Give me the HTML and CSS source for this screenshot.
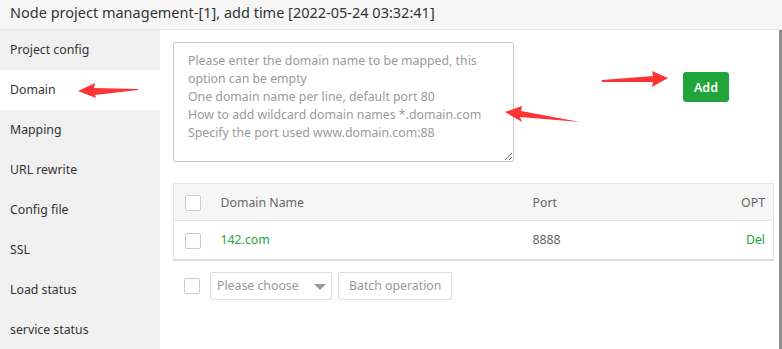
FILE: index.html
```html
<!DOCTYPE html>
<html lang="en">
<head>
  <meta charset="UTF-8" />
  <title>Node project management</title>
  <link rel="stylesheet" href="styles.css">
</head>
<body>
  <div class="title">Node project management-[1], add time [2022-05-24 03:32:41]</div>

  <div class="main">
    <!-- Side menu -->
    <ul class="menu">
      <li>Project config</li>
      <li class="active">Domain</li>
      <li>Mapping</li>
      <li>URL rewrite</li>
      <li>Config file</li>
      <li>SSL</li>
      <li>Load status</li>
      <li>service status</li>
    </ul>

    <div class="content">
      <div class="add-row">
        <textarea class="domain-input" placeholder="Please enter the domain name to be mapped, this option can be empty&#10;One domain name per line, default port 80&#10;How to add wildcard domain names *.domain.com&#10;Specify the port used www.domain.com:88"></textarea>
        <button class="btn-add">Add</button>
      </div>

      <table class="domain-table">
        <thead>
          <tr>
            <th class="col-check"><span class="check"></span></th>
            <th class="col-name">Domain Name</th>
            <th>Port</th>
            <th class="col-opt">OPT</th>
          </tr>
        </thead>
        <tbody>
          <tr>
            <td class="col-check"><span class="check"></span></td>
            <td class="col-name"><a class="link">142.com</a></td>
            <td>8888</td>
            <td class="col-opt"><a class="link">Del</a></td>
          </tr>
        </tbody>
      </table>

      <div class="batch">
        <span class="check"></span>
        <div class="select">Please choose <span class="caret"></span></div>
        <button class="btn-batch">Batch operation</button>
      </div>
    </div>

    <div class="scroll"></div>
  </div>

  <!-- annotation arrows -->
  <svg class="arrows" width="782" height="349" viewBox="0 0 782 349">
    <polygon fill="#ff3333" points="78,91 95,83 94,88 138,89 138,90 95,95 96,98"/>
    <polygon fill="#ff3333" points="668,78 652,71 653,76 602,80 602,82 653,82 652,87"/>
    <polygon fill="#ff3333" points="505,112 522,106 521,111 580,122 520,117 522,122"/>
  </svg>
</body>
</html>
```

FILE: styles.css
```css
* {
  box-sizing: border-box;
  margin: 0;
  padding: 0;
}

body {
  font-family: 'Noto Sans', 'Open Sans', sans-serif;
  font-size: 12.3px;
  color: #333;
  background: #fff;
  width: 782px;
  height: 349px;
  overflow: hidden;
  position: relative;
}

.title {
  height: 30px;
  line-height: 24px;
  padding: 0 10px;
  font-size: 14.5px;
  color: #333;
  background: #f6f6f6;
  border-bottom: 1px solid #e8e8e8;
  white-space: nowrap;
}

.main {
  display: flex;
  height: 319px;
}

.menu {
  list-style: none;
  width: 160px;
  background: #f0f0f0;
}

.menu li {
  height: 40px;
  line-height: 40px;
  padding-left: 10px;
  color: #333;
}

.menu li.active {
  background: #fff;
}

.content {
  flex: 1;
  padding: 12px 5px 0 13px;
}

.scroll {
  width: 3px;
  background: #8f8f8f;
}

.add-row {
  display: flex;
  align-items: flex-start;
}

.domain-input {
  width: 341px;
  height: 120px;
  padding: 9px 14px;
  border: 1px solid #ccc;
  border-radius: 2px;
  font-family: inherit;
  font-size: 12.3px;
  line-height: 18px;
  resize: vertical;
  outline: none;
}

.domain-input::placeholder {
  color: #9a9a9a;
}

.btn-add {
  margin: 30px 0 0 169px;
  width: 46px;
  height: 30px;
  border: none;
  border-radius: 3px;
  background: #20a53a;
  color: #fff;
  font-family: inherit;
  font-size: 12.5px;
  font-weight: 600;
}

.domain-table {
  margin-top: 21px;
  width: 601px;
  border-collapse: collapse;
  border: 1px solid #e6e6e6;
  border-bottom: 2px solid #dcdcdc;
}

.domain-table th,
.domain-table td {
  height: 37px;
  text-align: left;
  font-weight: normal;
  color: #666;
  vertical-align: middle;
}

.domain-table thead tr {
  background: #f6f6f6;
  border-bottom: 1px solid #e6e6e6;
}

.domain-table td {
  height: 39px;
}

.col-check {
  width: 47px;
  padding-left: 11px;
}

.col-name {
  width: 312px;
}

.domain-table .col-opt {
  text-align: right;
  padding-right: 8px;
}

.link {
  color: #20a53a;
  cursor: pointer;
}

.check {
  display: inline-block;
  width: 16px;
  height: 16px;
  border: 1px solid #ccc;
  border-radius: 2px;
  background: #fff;
  vertical-align: middle;
}

.batch {
  display: flex;
  align-items: center;
  margin-top: 11px;
  padding-left: 11px;
}

.select {
  position: relative;
  width: 122px;
  height: 28px;
  line-height: 26px;
  margin-left: 10px;
  padding-left: 6px;
  border: 1px solid #ddd;
  border-radius: 2px;
  color: #999;
}

.caret {
  position: absolute;
  right: 5px;
  top: 11px;
  border-left: 6px solid transparent;
  border-right: 6px solid transparent;
  border-top: 6px solid #999;
}

.btn-batch {
  margin-left: 6px;
  height: 28px;
  padding: 0 10px;
  border: 1px solid #ddd;
  border-radius: 2px;
  background: #fff;
  color: #999;
  font-family: inherit;
  font-size: 12.3px;
}

.arrows {
  position: absolute;
  left: 0;
  top: 0;
  pointer-events: none;
}
```
